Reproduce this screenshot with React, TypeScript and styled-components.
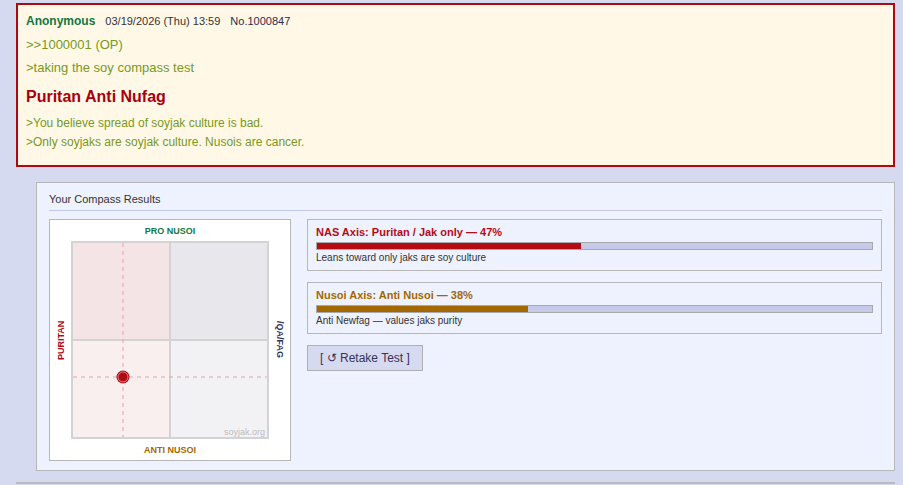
import React from "react";
import styled, { createGlobalStyle } from "styled-components";

const GlobalStyle = createGlobalStyle`
  body {
    margin: 0;
    background: #d6daf0;
    font-family: "Liberation Sans", Arial, sans-serif;
    color: #333;
  }
`;

const Page = styled.div`
  width: 879px;
  padding: 3px 0 0 16px;
`;

const Post = styled.div`
  box-sizing: border-box;
  width: 879px;
  border: 2px solid #b0080f;
  background: #fff8e7;
  padding: 8px 8px 15px;
`;

const PostHeader = styled.div`
  display: flex;
  align-items: baseline;
  gap: 10px;
  line-height: 17px;
`;

const Name = styled.span`
  color: #117743;
  font-weight: bold;
  font-size: 12px;
`;

const DateText = styled.span`
  font-size: 11px;
  color: #333;
`;

const PostNo = styled.span`
  font-size: 11px;
  color: #2b2b4a;
`;

const Greentext = styled.div<{ $size: number; $gap: number }>`
  color: #789922;
  font-size: ${(p) => p.$size}px;
  line-height: ${(p) => p.$size + 3}px;
  margin-top: ${(p) => p.$gap}px;
`;

const Verdict = styled.div`
  color: #a8000c;
  font-weight: bold;
  font-size: 16px;
  line-height: 19px;
  margin-top: 11px;
`;

const Panel = styled.div`
  box-sizing: border-box;
  width: 859px;
  height: 289px;
  margin: 15px 0 0 20px;
  border: 1px solid #b7b7b7;
  background: #eef2fe;
`;

const PanelTitle = styled.div`
  margin: 0 12px;
  padding: 10px 0 4px;
  font-size: 11px;
  line-height: 13px;
  color: #333;
  border-bottom: 1px solid #c4c8ea;
`;

const PanelBody = styled.div`
  display: flex;
  align-items: flex-start;
  gap: 16px;
  padding: 8px 12px 0;
`;

const Compass = styled.div`
  box-sizing: border-box;
  width: 242px;
  height: 242px;
  border: 1px solid #b7b7b7;
  background: #fff;
  display: grid;
  grid-template-columns: 21px 198px 21px;
  grid-template-rows: 21px 198px 21px;
`;

const AxisLabel = styled.div<{ $color: string; $vertical?: "up" | "down" }>`
  display: flex;
  align-items: center;
  justify-content: center;
  font-size: 9px;
  font-weight: bold;
  color: ${(p) => p.$color};
  white-space: nowrap;
  writing-mode: ${(p) => (p.$vertical ? "vertical-rl" : "horizontal-tb")};
  transform: ${(p) => (p.$vertical === "up" ? "rotate(180deg)" : "none")};
`;

const Results = styled.div`
  flex: 1;
  display: flex;
  flex-direction: column;
  align-items: flex-start;
  gap: 11px;
`;

const Card = styled.div`
  box-sizing: border-box;
  width: 100%;
  border: 1px solid #b7b7b7;
  padding: 6px 8px;
`;

const CardTitle = styled.div<{ $color: string }>`
  color: ${(p) => p.$color};
  font-weight: bold;
  font-size: 11px;
  line-height: 13px;
`;

const Track = styled.div`
  box-sizing: border-box;
  height: 8px;
  margin-top: 3px;
  border: 1px solid #a9a9a9;
  background: #c6cae8;
`;

const Fill = styled.div<{ $color: string }>`
  height: 100%;
  background: ${(p) => p.$color};
`;

const CardNote = styled.div`
  margin-top: 2px;
  font-size: 10px;
  line-height: 12px;
  color: #333;
`;

const RetakeButton = styled.button`
  box-sizing: border-box;
  height: 26px;
  padding: 0 12px;
  border: 1px solid #b0b0b0;
  background: #d6daf0;
  color: #34345c;
  font-family: "Liberation Sans", Arial, sans-serif;
  font-size: 12px;
  cursor: pointer;
`;

const Divider = styled.div`
  margin-top: 11px;
  width: 879px;
  border-top: 2px solid #b9b9c0;
`;

const axes = [
  {
    title: "NAS Axis: Puritan / Jak only — 47%",
    note: "Leans toward only jaks are soy culture",
    color: "#b40c14",
    value: 47.5,
  },
  {
    title: "Nusoi Axis: Anti Nusoi — 38%",
    note: "Anti Newfag — values jaks purity",
    color: "#a36800",
    value: 38,
  },
];

function Plot() {
  const dot = { x: 52, y: 136 };
  return (
    <svg width="198" height="198" viewBox="0 0 198 198">
      <rect x="0" y="0" width="99" height="99" fill="#f5e4e6" />
      <rect x="99" y="0" width="99" height="99" fill="#e8e8ec" />
      <rect x="0" y="99" width="99" height="99" fill="#f9efef" />
      <rect x="99" y="99" width="99" height="99" fill="#f2f2f5" />
      <line x1="99" y1="0" x2="99" y2="198" stroke="#d3d3d6" strokeWidth="2" />
      <line x1="0" y1="99" x2="198" y2="99" stroke="#d3d3d6" strokeWidth="2" />
      <rect x="1" y="1" width="196" height="196" fill="none" stroke="#d3d3d6" strokeWidth="2" />
      <line x1={dot.x} y1="2" x2={dot.x} y2="196" stroke="#e2a2ab" strokeDasharray="4 4" />
      <line x1="2" y1={dot.y} x2="196" y2={dot.y} stroke="#e2a2ab" strokeDasharray="4 4" />
      <text
        x="194"
        y="194"
        textAnchor="end"
        fontSize="9"
        fill="#bdbdbd"
        fontFamily="Liberation Sans, Arial, sans-serif"
      >
        soyjak.org
      </text>
      <circle cx={dot.x} cy={dot.y} r="6.5" fill="#b00a12" />
      <circle cx={dot.x} cy={dot.y} r="5" fill="none" stroke="#e9a0a4" strokeWidth="0.8" />
    </svg>
  );
}

export default function App() {
  return (
    <Page>
      <GlobalStyle />
      <Post>
        <PostHeader>
          <Name>Anonymous</Name>
          <DateText>03/19/2026 (Thu) 13:59</DateText>
          <PostNo>No.1000847</PostNo>
        </PostHeader>
        <Greentext $size={13} $gap={7}>&gt;&gt;1000001 (OP)</Greentext>
        <Greentext $size={13} $gap={7}>&gt;taking the soy compass test</Greentext>
        <Verdict>Puritan Anti Nufag</Verdict>
        <Greentext $size={12} $gap={10}>&gt;You believe spread of soyjak culture is bad.</Greentext>
        <Greentext $size={12} $gap={4}>&gt;Only soyjaks are soyjak culture. Nusois are cancer.</Greentext>
      </Post>

      <Panel>
        <PanelTitle>Your Compass Results</PanelTitle>
        <PanelBody>
          <Compass>
            <div />
            <AxisLabel $color="#117743">PRO NUSOI</AxisLabel>
            <div />
            <AxisLabel $color="#b00a12" $vertical="up">PURITAN</AxisLabel>
            <Plot />
            <AxisLabel $color="#34345c" $vertical="down">/QA/FAG</AxisLabel>
            <div />
            <AxisLabel $color="#a36800">ANTI NUSOI</AxisLabel>
            <div />
          </Compass>
          <Results>
            {axes.map((a) => (
              <Card key={a.title}>
                <CardTitle $color={a.color}>{a.title}</CardTitle>
                <Track>
                  <Fill $color={a.color} style={{ width: `${a.value}%` }} />
                </Track>
                <CardNote>{a.note}</CardNote>
              </Card>
            ))}
            <RetakeButton>[ ↺ Retake Test ]</RetakeButton>
          </Results>
        </PanelBody>
      </Panel>
      <Divider />
    </Page>
  );
}
